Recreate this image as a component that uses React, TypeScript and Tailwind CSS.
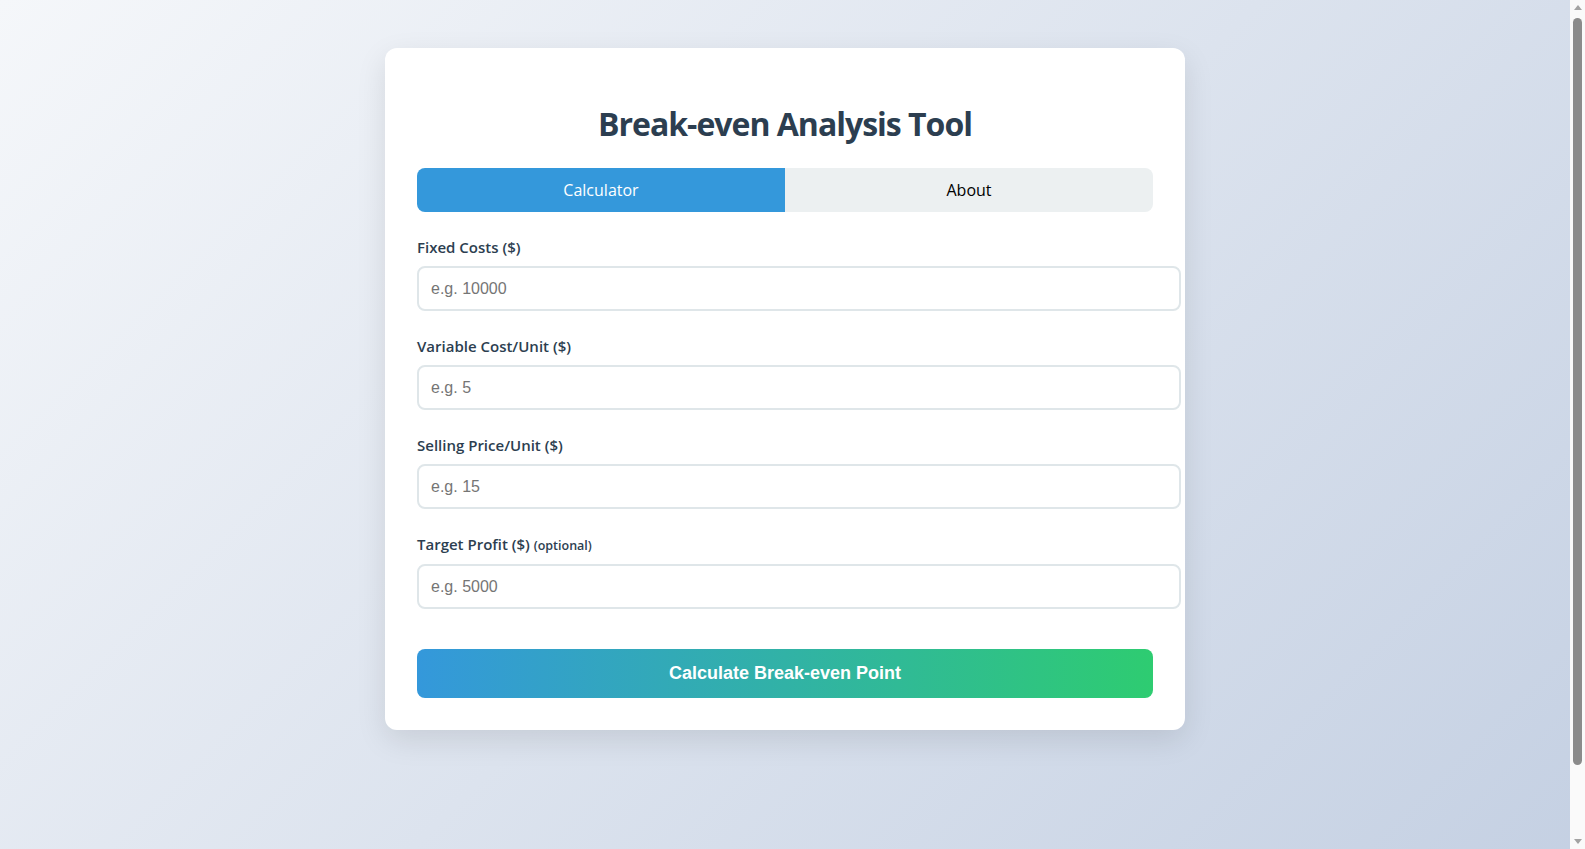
import { useState } from 'react';

const fields = [
  { label: 'Fixed Costs ($)', placeholder: 'e.g. 10000' },
  { label: 'Variable Cost/Unit ($)', placeholder: 'e.g. 5' },
  { label: 'Selling Price/Unit ($)', placeholder: 'e.g. 15' },
  { label: 'Target Profit ($)', placeholder: 'e.g. 5000', optional: true },
];

export default function App() {
  const [tab, setTab] = useState<'calc' | 'about'>('calc');

  return (
    <div
      className="min-h-[934px] bg-[linear-gradient(135deg,#f5f7fa_0%,#c3cfe2_100%)] pt-[48px] pr-[15px] text-[#2c3e50]"
      style={{ fontFamily: '"Open Sans", "Noto Sans", sans-serif' }}
    >
      <div className="mx-auto w-[800px] rounded-xl bg-white p-8 shadow-[0_10px_30px_rgba(0,0,0,0.1)]">
        <h1 className="mt-6 mb-6 text-center text-[32px] leading-[40px] font-bold tracking-[-1px] text-[#2c3e50]">
          Break-even Analysis Tool
        </h1>

        <div className="mb-[25px] flex overflow-hidden rounded-lg">
          <button
            onClick={() => setTab('calc')}
            className={cn(
              'h-[44px] flex-1 text-[16px]',
              tab === 'calc' ? 'bg-[#3498db] text-white' : 'bg-[#ecf0f1] text-black'
            )}
          >
            Calculator
          </button>
          <button
            onClick={() => setTab('about')}
            className={cn(
              'h-[44px] flex-1 text-[16px]',
              tab === 'about' ? 'bg-[#3498db] text-white' : 'bg-[#ecf0f1] text-black'
            )}
          >
            About
          </button>
        </div>

        {fields.map((f) => (
          <div key={f.label} className="mb-[25px]">
            <label className="mb-2 block text-[15px] leading-[21px] font-semibold text-[#2c3e50]">
              {f.label}{' '}
              {f.optional && <span className="text-[12.5px] font-semibold">(optional)</span>}
            </label>
            <input
              type="number"
              placeholder={f.placeholder}
              className="box-content block h-[19px] w-full rounded-lg border-2 border-[#dfe6e9] px-3 py-[11px] text-[16px] leading-[19px] outline-none placeholder:text-[#757575]"
              style={{ fontFamily: '"Liberation Sans", Arial, sans-serif' }}
            />
          </div>
        ))}

        <button
          className="mt-[15px] h-[49px] w-full rounded-lg bg-[linear-gradient(90deg,#3498db,#2ecc71)] text-[18px] font-bold text-white"
          style={{ fontFamily: '"Liberation Sans", Arial, sans-serif' }}
        >
          Calculate Break-even Point
        </button>
      </div>

      {/* browser scrollbar */}
      <div className="fixed top-0 right-0 flex h-screen w-[15px] flex-col items-center bg-[#fafafa]">
        <span className="mt-[5px] h-0 w-0 border-x-[4px] border-b-[5px] border-x-transparent border-b-[#a3a3a3]" />
        <span className="mt-[8px] h-[747px] w-[9px] rounded-full bg-[#8b8b8b]" />
        <span className="mt-auto mb-[5px] h-0 w-0 border-x-[4px] border-t-[5px] border-x-transparent border-t-[#a3a3a3]" />
      </div>
    </div>
  );
}

function cn(...inputs: any[]) {
  return inputs.filter(Boolean).join(' ');
}
